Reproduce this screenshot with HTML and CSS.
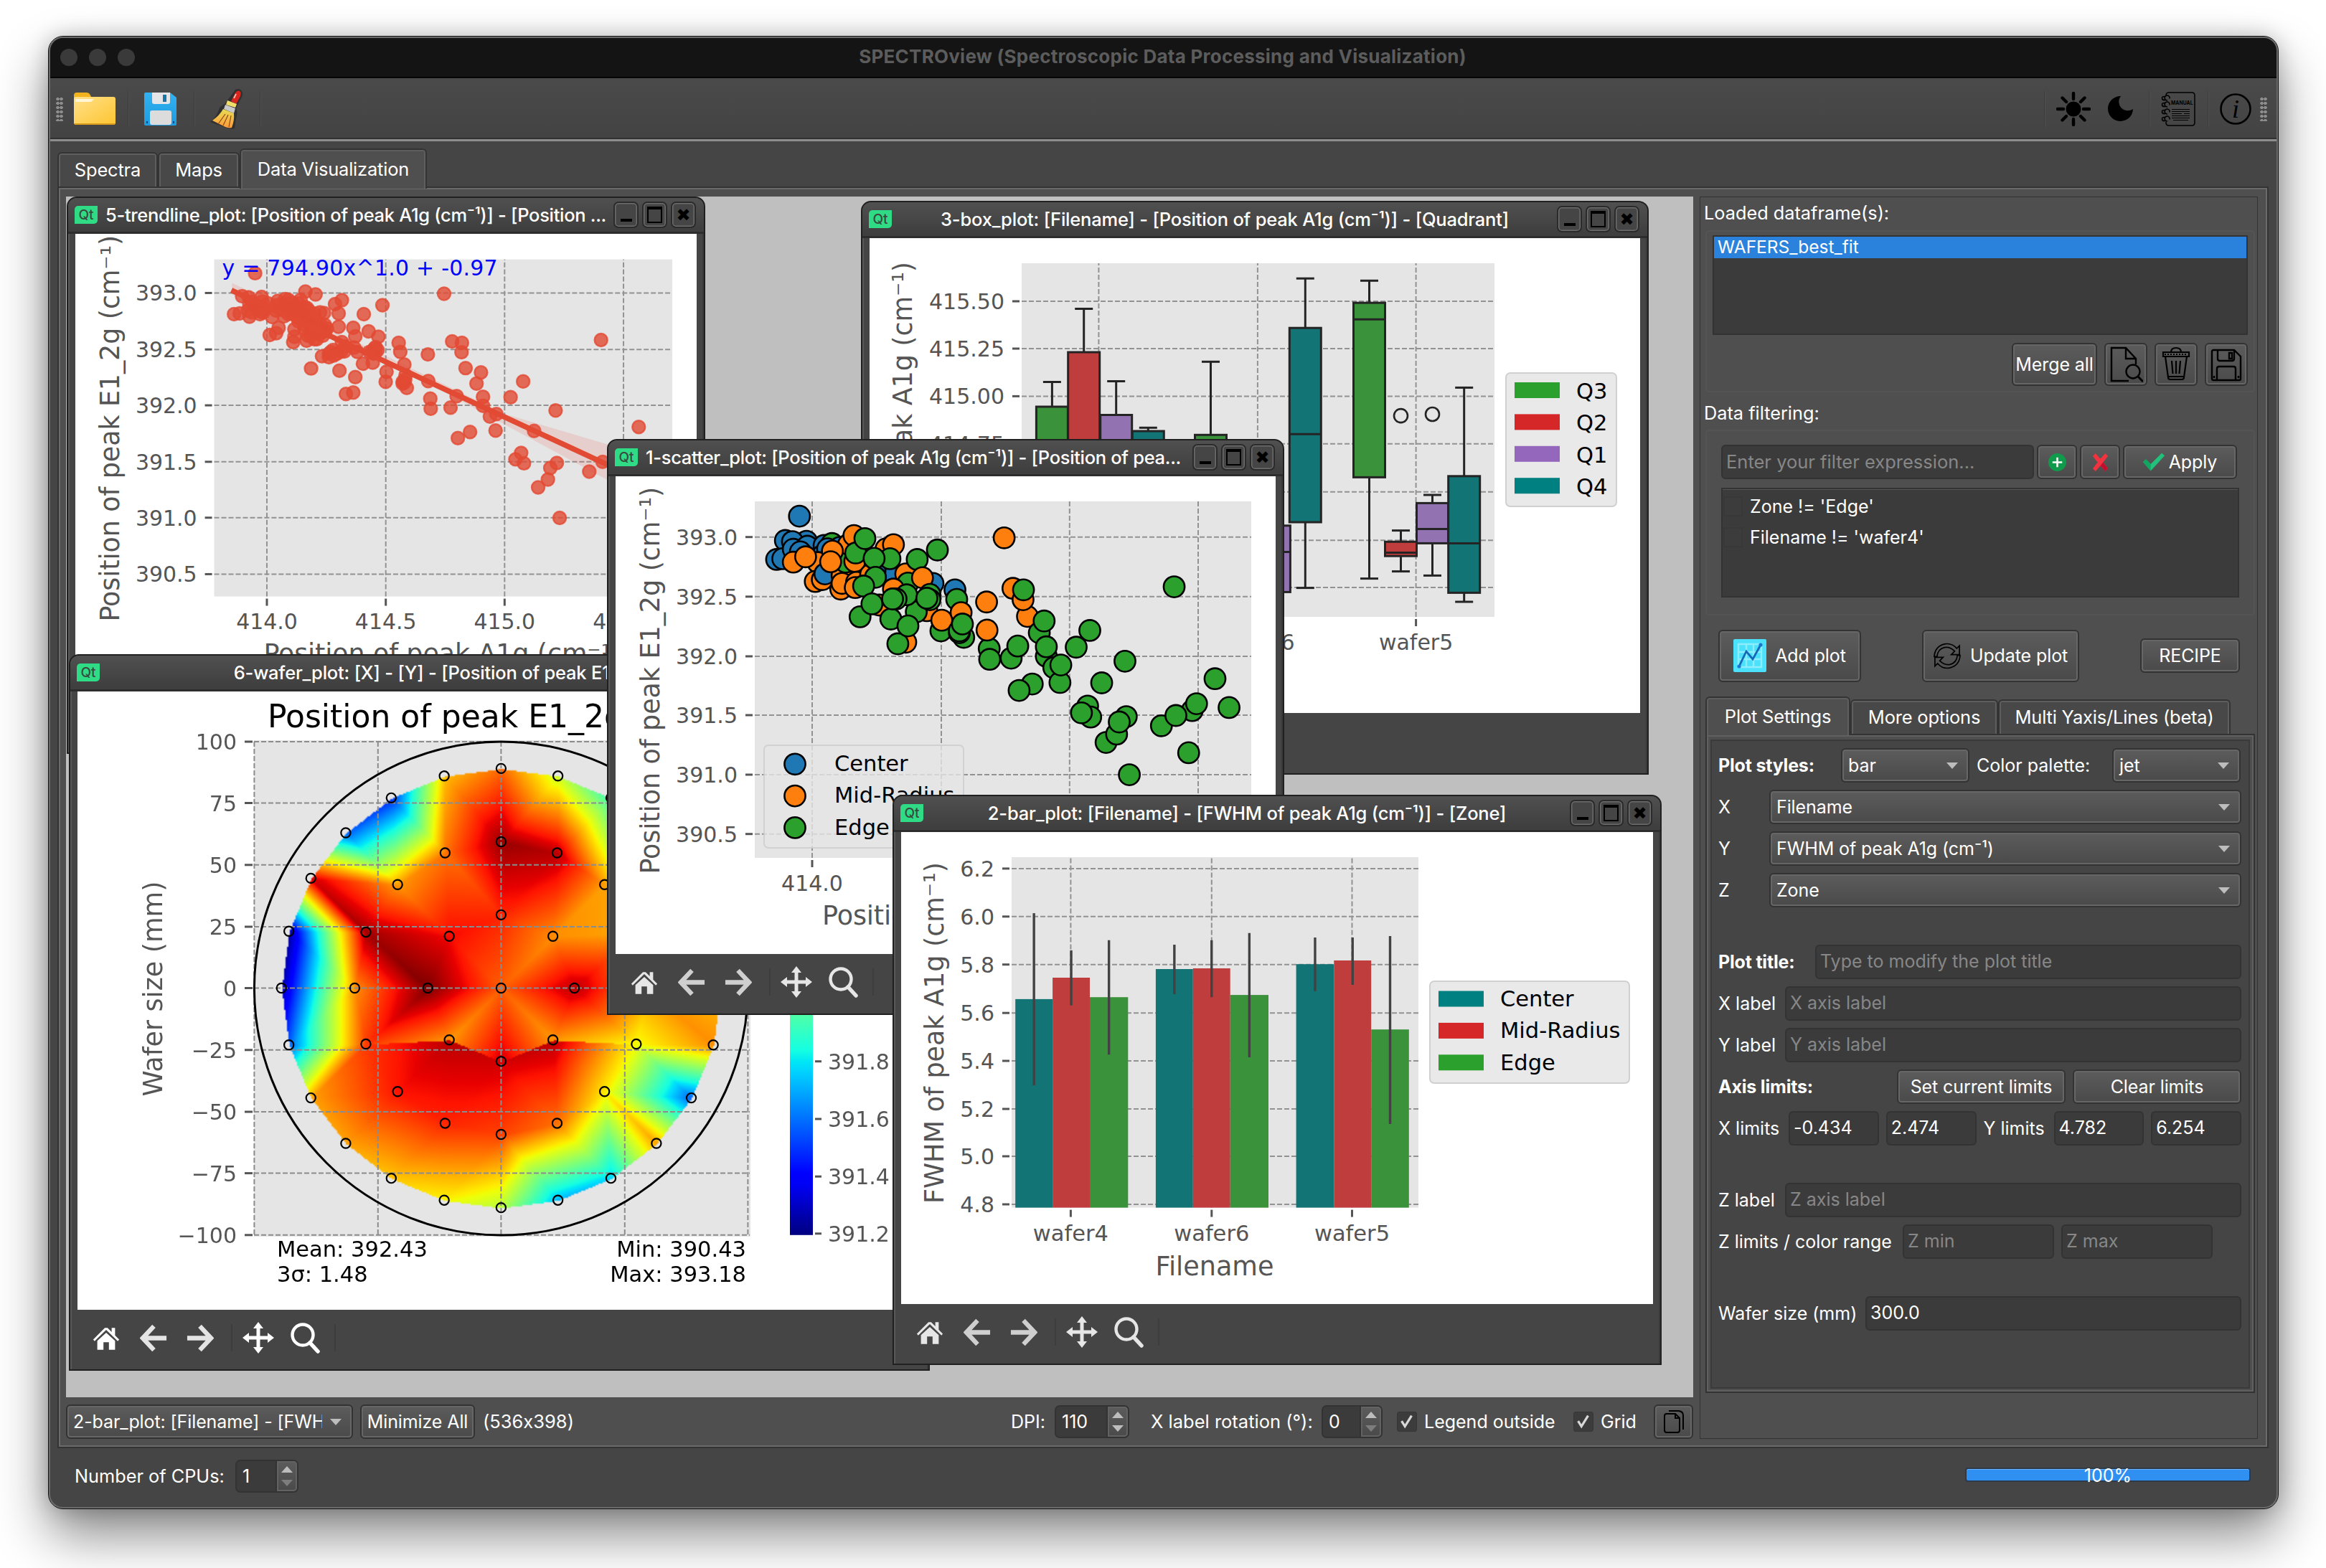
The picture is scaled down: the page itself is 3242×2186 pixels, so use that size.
FILE: index.html
```html
<!DOCTYPE html>
<html lang="en">
<head>
<meta charset="utf-8">
<title>SPECTROview (Spectroscopic Data Processing and Visualization)</title>
<link rel="stylesheet" href="styles.css">
</head>
<body>
<svg class="defs" width="0" height="0">
  <defs>
    <linearGradient id="gFolder" x1="0" y1="0" x2="1" y2="1"><stop offset="0" stop-color="#ffe08a"/><stop offset="1" stop-color="#fdc530"/></linearGradient>
    <linearGradient id="gFlop" x1="0" y1="0" x2="0" y2="1"><stop offset="0" stop-color="#32b2f0"/><stop offset="1" stop-color="#1d9ce0"/></linearGradient>
    <linearGradient id="gBroom" x1="0" y1="0" x2="0" y2="1"><stop offset="0" stop-color="#e8dc55"/><stop offset="1" stop-color="#ff9a3c"/></linearGradient>
  </defs>
  <symbol id="home" viewBox="0 0 42 36"><path d="M2 20 19 3l4 0 6 6V3h5v11l6 6-2 2.500L21 6 4 22.500z"/><path d="M21 10 34 22v13H25V24h-8v11H8V22z"/></symbol>
  <symbol id="back" viewBox="0 0 40 40"><path d="M20 3 4 20l16 17M5 20h33" fill="none" stroke="currentColor" stroke-width="6.500"/></symbol>
  <symbol id="fwd" viewBox="0 0 40 40"><path d="M20 3l16 17-16 17M35 20H2" fill="none" stroke="currentColor" stroke-width="6.500"/></symbol>
  <symbol id="move" viewBox="0 0 44 44"><path d="M22 0l7 9h-4.500v10.500H35V15l9 7-9 7v-4.500H24.500V35H29l-7 9-7-9h4.500V24.500H9V29l-9-7 9-7v4.500h10.500V9H15z"/></symbol>
  <symbol id="lens" viewBox="0 0 44 44"><circle cx="18" cy="18" r="14.500" fill="none" stroke="currentColor" stroke-width="4.400"/><path d="M28 29 39 41" stroke="currentColor" stroke-width="5.500" stroke-linecap="round"/></symbol>
</svg>

<main class="app">
  <header class="titlebar">
    <span class="dot"></span><span class="dot"></span><span class="dot"></span>
    <h1>SPECTROview (Spectroscopic Data Processing and Visualization)</h1>
  </header>

  <nav class="toolbar">
    <span class="grip"></span>
    <svg class="ic-folder" viewBox="0 0 58 45"><path d="M0 4q0-4 4-4h14q4 0 6 6l2 5H0z" fill="#f2b31c"/><rect y="6" width="58" height="39" rx="3" fill="url(#gFolder)"/><path d="M2 9h26l-4 4H2z" fill="#fff6d8"/><path d="M1 43h56v2H1z" fill="#d79a1c"/></svg>
    <span class="sep"></span>
    <svg class="ic-flop" viewBox="0 0 45 46"><path d="M2 0h34l9 7v37q0 2-2 2H2q-2 0-2-2V2q0-2 2-2z" fill="url(#gFlop)"/><path d="M11 0h25v13q0 3-3 3H14q-3 0-3-3z" fill="#e3e5e8"/><rect x="26" y="3" width="5" height="10" fill="#1976a8"/><rect x="8" y="25" width="30" height="20" rx="3" fill="#dcdcdc"/><path d="M3 40h2v3H3zM40 40h2v3h-2z" fill="#0b4a86"/></svg>
    <span class="sep"></span>
    <svg class="ic-broom" viewBox="0 0 48 58"><path d="M36 2q6-3 9 2t-2 12l-6 12q3 6 0 14l-2 14q-4 2-12-1L1 47q10-8 13-20l8-6z" fill="#303030"/><path d="M37 5q4-3 6 0t-2 10l-4 7-7-4z" fill="#d9261c"/><path d="M37 8l-3 6" stroke="#ffb0a8" stroke-width="2"/><path d="M25 17l13 5-2 5-13-4z" fill="#f0de6a"/><path d="M22 23l14 5-2 7-14-6z" fill="#c9c9c9"/><path d="M19 29l15 6q1 9-3 20-4 1-9-1L4 45q10-7 15-16z" fill="url(#gBroom)"/><path d="M22 36 12 50M26 37l-7 15M30 38l-3 16" stroke="#8a4a10" stroke-width="1.200"/></svg>
    <span class="sep"></span>
    <span class="grow"></span>
    <span class="sep"></span>
    <svg class="ic-sun" viewBox="0 0 48 48"><circle cx="24" cy="24" r="10.500"/><path d="M24 2v8M24 38v8M2 24h8M38 24h8M8.500 8.500l5.500 5.500M34 34l5.500 5.500M8.500 39.500 14 34M34 14l5.500-5.500" stroke="#000" stroke-width="4.400" stroke-linecap="round"/></svg>
    <svg class="ic-moon" viewBox="0 0 35 35"><path d="M18 0A17.500 17.500 0 1 0 35 18a12.500 12.500 0 0 1-17-18z"/></svg>
    <span class="sep"></span>
    <svg class="ic-man" viewBox="0 0 48 48" fill="none" stroke="#000" stroke-width="1.500"><path d="M7 6V5q0-4 4-4h32q4 0 4 4v38q0 4-4 4H11q-4 0-4-4v-1"/><path d="M15 24.500h25M15 27.500h25M15 30.500h14M32 30.500h8M15 33.500h25M15 36.500h25M17 39.500h21" stroke-width="1.100"/><g stroke-width="1.600"><path d="M12 9.500A3.500 3.500 0 1 0 9 12M6 6.500Q1 6 1.500 9t4 2.500"/><path d="M12 18.500A3.500 3.500 0 1 0 9 21M6 15.500Q1 15 1.500 18t4 2.500"/><path d="M12 28.500A3.500 3.500 0 1 0 9 31M6 25.500Q1 25 1.500 28t4 2.500"/><path d="M12 38.500A3.500 3.500 0 1 0 9 41M6 35.500Q1 35 1.500 38t4 2.500"/></g><text x="14" y="17.500" font-size="7.500" font-weight="700" font-family="Inter,sans-serif" textLength="30.500" lengthAdjust="spacingAndGlyphs" stroke="none" fill="#000">MANUAL</text></svg>
    <span class="sep"></span>
    <svg class="ic-info" viewBox="0 0 44 44"><circle cx="22" cy="22" r="20.500" fill="none" stroke="#000" stroke-width="2.600"/><text x="22" y="34" text-anchor="middle" font-family="Liberation Serif,serif" font-style="italic" font-size="36">i</text></svg>
    <span class="grip"></span>
  </nav>

  <div class="tabs">
    <span class="tab">Spectra</span><span class="tab t2">Maps</span><span class="tab t3 on">Data Visualization</span>
  </div>

  <section class="page">
    <div class="work">
      <div class="mdi">
        <article class="win w3">
          <header><i class="qt">Qt</i><b>3-box_plot: [Filename] - [Position of peak A1g (cm⁻¹)] - [Quadrant]</b><span class="wb min"></span><span class="wb max"></span><span class="wb cls"></span></header>
          <div class="plot"><svg id="p3" viewBox="1212 332 1074 662"></svg></div>
        </article>
        <article class="win w5">
          <header><i class="qt">Qt</i><b>5-trendline_plot: [Position of peak A1g (cm⁻¹)] - [Position ...</b><span class="wb min"></span><span class="wb max"></span><span class="wb cls"></span></header>
          <div class="plot"><svg id="p5" viewBox="104 326 868 640"></svg></div>
        </article>
        <article class="win w6">
          <header><i class="qt">Qt</i><b>6-wafer_plot: [X] - [Y] - [Position of peak E1_2g (cm⁻¹)]</b><span class="wb min"></span><span class="wb max"></span><span class="wb cls"></span></header>
          <div class="plot"><canvas id="wafer" width="346" height="346"></canvas><svg id="p6" viewBox="108 964 1176 862"></svg></div>
          <footer><svg class="h"><use href="#home"/></svg><svg class="a"><use href="#back"/></svg><svg class="a f"><use href="#fwd"/></svg><i></i><svg class="m"><use href="#move"/></svg><svg class="z"><use href="#lens"/></svg><i></i></footer>
        </article>
        <article class="win w1">
          <header><i class="qt">Qt</i><b>1-scatter_plot: [Position of peak A1g (cm⁻¹)] - [Position of pea...</b><span class="wb min"></span><span class="wb max"></span><span class="wb cls"></span></header>
          <div class="plot"><svg id="p1" viewBox="858 664 920 666"></svg></div>
          <footer><svg class="h"><use href="#home"/></svg><svg class="a"><use href="#back"/></svg><svg class="a f"><use href="#fwd"/></svg><i></i><svg class="m"><use href="#move"/></svg><svg class="z"><use href="#lens"/></svg><i></i></footer>
        </article>
        <article class="win w2">
          <header><i class="qt">Qt</i><b>2-bar_plot: [Filename] - [FWHM of peak A1g (cm⁻¹)] - [Zone]</b><span class="wb min"></span><span class="wb max"></span><span class="wb cls"></span></header>
          <div class="plot"><svg id="p2" viewBox="1256 1160 1048 658"></svg></div>
          <footer><svg class="h"><use href="#home"/></svg><svg class="a"><use href="#back"/></svg><svg class="a f"><use href="#fwd"/></svg><i></i><svg class="m"><use href="#move"/></svg><svg class="z"><use href="#lens"/></svg><i></i></footer>
        </article>
      </div>
      <div class="plotbar">
        <div class="combo cur"><span>2-bar_plot: [Filename] - [FWHM</span></div>
        <div class="btn mini">Minimize All</div>
        <span class="size">(536x398)</span>
        <span class="grow"></span>
        <span class="dpi">DPI:</span>
        <div class="spin s1"><span>110</span><em><u></u><s></s></em></div>
        <span class="rot">X label rotation (°):</span>
        <div class="spin s2"><span>0</span><em><u></u><s class="dim"></s></em></div>
        <span class="chk c1"><svg viewBox="0 0 28 28"><path d="M6 13l5 8L21 5"/></svg></span><span class="lo">Legend outside</span>
        <span class="chk c2"><svg viewBox="0 0 28 28"><path d="M6 13l5 8L21 5"/></svg></span><span>Grid</span>
        <div class="btn copy"><svg viewBox="0 0 28 34" fill="none" stroke="#000" stroke-width="2"><path d="M3 6h13l6 6v17q0 3-3 3H4q-3 0-3-3V9q0-3 3-3M16 6v6h6M7 2h14q6 1 6 6v20"/></svg></div>
      </div>
    </div>

    <aside class="side">
      <p class="cap">Loaded dataframe(s):</p>
      <div class="group g1">
        <div class="list"><div class="sel">WAFERS_best_fit</div></div>
        <div class="row end">
          <div class="btn merge">Merge all</div>
          <div class="btn sq"><svg viewBox="0 0 48 50" fill="none" stroke="#000" stroke-width="2.400"><path d="M38 25V17L24 2H4v46h24M24 2v15h14"/><circle cx="34" cy="35" r="9.500"/><path d="M41 42l7 7" stroke-width="3"/></svg></div>
          <div class="btn sq"><svg viewBox="0 0 48 50" fill="none" stroke="#000" stroke-width="2.200"><path d="M6 8h36v6H6zM17 8q0-6 7-6t7 6M9 14l4 29q0 3 3 3h16q3 0 3-3l4-29M18 20l1.500 18M24 20v18M30 20l-1.500 18M14 42h20"/><path d="M8 11h32" stroke-dasharray="2 2"/></svg></div>
          <div class="btn sq"><svg viewBox="0 0 48 50" fill="none" stroke="#000" stroke-width="2.400"><path d="M4 7q0-2 2-2h29l9 9v31q0 2-2 2H6q-2 0-2-2zM12 5v12q0 3 3 3h17q3 0 3-3V5M28 9h4v8h-4zM11 46V31q0-3 3-3h20q3 0 3 3v15M7 41v3M41 41v3"/></svg></div>
        </div>
      </div>
      <p class="cap c2nd">Data filtering:</p>
      <div class="group g2">
        <div class="row">
          <div class="inp expr ph">Enter your filter expression...</div>
          <div class="btn ico"><svg viewBox="0 0 28 28"><circle cx="14" cy="14" r="13" fill="#109a4c"/><path d="M14 7v14M7 14h14" stroke="#fff" stroke-width="2.600"/></svg></div>
          <div class="btn ico"><svg viewBox="0 0 28 28"><path d="M3 5l4-4 7 8 7-8 4 4-7 9 7 9-4 4-7-8-7 8-4-4 7-9z" fill="#f3323f"/><path d="M14 19l4-5 7 9-4 4z" fill="#c0102e"/></svg></div>
          <div class="btn apply"><svg viewBox="0 0 32 26"><path d="M0 13l4-4 7 7L27 0l4 4-20 22z" fill="#22c07a"/><path d="M0 13l4-4 7 7v10z" fill="#12a562"/></svg>Apply</div>
        </div>
        <div class="list filters">
          <div><i></i>Zone != 'Edge'</div>
          <div><i></i>Filename != 'wafer4'</div>
        </div>
      </div>
      <div class="row actions">
        <div class="btn add"><svg viewBox="0 0 46 46"><rect width="46" height="46" rx="2" fill="#4be1fb"/><path d="M7 7h32v32H7zM7 18h32M7 28h32M18 7v32M28 7v32" fill="none" stroke="#8ceefd" stroke-width="2.400"/><path d="M8 38 18 17l9 11L38 8" fill="none" stroke="#1669b8" stroke-width="2.800"/><circle cx="8" cy="38" r="2.600" fill="#1b78d0"/><circle cx="38" cy="8" r="2.600" fill="#1b78d0"/></svg>Add plot</div>
        <div class="btn upd"><svg viewBox="0 0 40 38" fill="none" stroke="#000" stroke-width="1.800"><path d="M1 20Q2 5 16 1.500 27-.5 34 8l4-4v13H26l5-5Q24 5 16 6.500 6 9 5 20zM39 18q-1 15-15 18.500Q13 38.500 6 30l-4 4V21h12l-5 5q7 7 15 5.500Q34 29 35 18z"/></svg>Update plot</div>
        <div class="btn rec">RECIPE</div>
      </div>
      <div class="tabs in">
        <span class="tab on a1">Plot Settings</span><span class="tab a2">More options</span><span class="tab a3">Multi Yaxis/Lines (beta)</span>
      </div>
      <div class="pane"><div class="form">
        <div class="row"><b class="l1">Plot styles:</b><div class="combo k1">bar</div><span class="l2">Color palette:</span><div class="combo k1">jet</div></div>
        <div class="row"><span class="l3">X</span><div class="combo fill">Filename</div></div>
        <div class="row"><span class="l3">Y</span><div class="combo fill">FWHM of peak A1g (cm⁻¹)</div></div>
        <div class="row gap"><span class="l3">Z</span><div class="combo fill">Zone</div></div>
        <div class="row"><b class="l4">Plot title:</b><div class="inp ph fill">Type to modify the plot title</div></div>
        <div class="row"><span class="l5">X label</span><div class="inp ph fill">X axis label</div></div>
        <div class="row"><span class="l5">Y label</span><div class="inp ph fill">Y axis label</div></div>
        <div class="row"><b class="grow">Axis limits:</b><div class="btn lim">Set current limits</div><div class="btn lim">Clear limits</div></div>
        <div class="row gap"><span class="l6">X limits</span><div class="inp n">-0.434</div><div class="inp n">2.474</div><span class="l7">Y limits</span><div class="inp n">4.782</div><div class="inp n">6.254</div></div>
        <div class="row"><span class="l5">Z label</span><div class="inp ph fill">Z axis label</div></div>
        <div class="row gap"><span class="l8">Z limits / color range</span><div class="inp ph zz">Z min</div><div class="inp ph zz">Z max</div></div>
        <div class="row"><span class="l9">Wafer size (mm)</span><div class="inp fill">300.0</div></div>
      </div></div>
    </aside>
  </section>

  <footer class="status">
    <span class="cpu">Number of CPUs:</span>
    <div class="spin s3"><span>1</span><em><u></u><s class="dim"></s></em></div>
    <span class="grow"></span>
    <div class="prog">100%</div>
  </footer>
</main>
<script src="plots.js"></script>
</body>
</html>
```
FILE: styles.css
```css
*{box-sizing:border-box}
body{margin:0;width:3242px;height:2186px;padding:51px 67px 0 68px;background:#fff;overflow:hidden;
  font:25px/30px Inter,"Noto Sans",sans-serif;font-feature-settings:"calt" 0;color:#fff;-webkit-font-smoothing:antialiased}
p,h1{margin:0}
.defs{position:absolute}
.grow{flex:1}
.app{height:2052px;border-radius:20px;background:#454545;display:flex;flex-direction:column;overflow:hidden;
  border:2px solid #6a6a6a;outline:1px solid #111;
  box-shadow:0 36px 72px rgba(0,0,0,.48),0 0 30px rgba(0,0,0,.22)}
.titlebar{height:56px;background:#141414;border-bottom:2px solid #060606;display:flex;align-items:center;gap:16px;padding-left:14px;position:relative;flex:none}
.dot{width:24px;height:24px;border-radius:50%;background:#3a3a3a}
.titlebar h1{position:absolute;left:0;right:2px;top:11px;text-align:center;font-size:26px;letter-spacing:.25px;font-weight:700;color:#5c5c5c}
.toolbar{height:88px;flex:none;background:linear-gradient(#4a4a4a,#434343);border-bottom:3px solid #8c8c8c;box-shadow:inset 0 -2px #303030;display:flex;align-items:center;padding:0 13px 0 8px}
.toolbar svg{display:block;flex:none}
.grip{width:10px;height:34px;background:radial-gradient(circle,#8d8d8d 2px,transparent 2.500px) 0 0/5px 6px}
.sep{width:2px;height:50px;background:#3b3b3b;border-right:1px solid #505050}
.ic-folder{width:58px;height:45px;margin:0 17px 0 15px}
.ic-flop{width:45px;height:46px;margin:0 24px 0 21px}
.ic-broom{width:48px;height:58px;margin:0 22px 0 20px}
.ic-sun{width:48px;height:48px;margin:0 24px 0 15px}
.ic-moon{width:35px;height:35px;margin-right:22px}
.ic-man{width:48px;height:48px;margin:0 17px 0 15px}
.ic-info{width:44px;height:44px;margin:0 12px 0 15px}

.tabs{display:flex;align-items:flex-end;height:66px;padding-left:10px;position:relative;z-index:1;margin-bottom:-3px;flex:none}
.tab{height:48px;border:2px solid #343434;border-bottom:0;border-radius:6px 6px 0 0;background:#484848;box-shadow:inset 0 2px #5e5e5e,inset 2px 0 #5e5e5e,inset -2px 0 #5e5e5e;
  width:140px;margin-bottom:3px;display:flex;align-items:center;justify-content:center;font-size:25.500px;letter-spacing:-.2px}
.t2{width:114px}
.t3{width:261px}
.tab.on{height:56px;margin-bottom:0;background:#4f4f4f;padding-bottom:0}
.page{height:1759px;flex:none;margin:0 11px 0 10px;border:2px solid #333;box-shadow:inset 0 0 0 2px #6a6a6a;background:#4f4f4f;padding:12px 12px 0 10px;display:flex;gap:9px}
.work{width:2268px;flex:none}
.mdi{height:1674px;background:#bfbfbf;position:relative;overflow:hidden}
.win{position:absolute;background:#454545;border:2px solid #202020;border-radius:14px 14px 0 0;padding:0 10px;box-shadow:inset 2px 0 #585858,inset -2px 0 #3a3a3a}
.win header{height:50px;margin:0 -10px;padding:0 11px 0 9px;display:flex;align-items:center;gap:5px;border-radius:12px 12px 0 0;background:linear-gradient(#505050,#3f3f3f 90%);border-bottom:3px solid #2d2d2d}
.win header b{flex:1;font-size:25.500px;font-weight:500;text-align:center;white-space:nowrap;letter-spacing:-.2px}
.w5 header b,.w1 header b{letter-spacing:-.32px;text-align:left;padding-left:5px}
.qt{width:32px;height:25px;margin-right:1px;background:#2fdc85;border-radius:5px 0 5px 0;color:#3a4a40;font-style:normal;font-size:19px;line-height:25px;text-align:center;font-weight:500;flex:none}
.wb{width:35px;height:37px;border:2px solid #2b2b2b;border-radius:7px;box-shadow:inset 0 0 0 1.500px #6d6d6d;background:#454545;display:flex;align-items:center;justify-content:center;flex:none}
.min::before{content:"";width:16px;height:4px;margin-top:14px;background:#000}
.max::before{content:"";width:17px;height:17px;border:2px solid #000;border-top-width:4px}
.cls::before{content:"✖";color:#000;font:bold 24px/24px "DejaVu Sans",sans-serif}
.plot{background:#fff;position:relative;overflow:hidden}
.plot svg{position:relative;display:block;width:100%;height:100%}
.plot canvas{position:absolute;left:246px;top:68px;width:692px;height:692px}
.w5{left:1px;top:0;width:890px;height:777px}.w5 .plot{height:640px}
.w3{left:1108px;top:6px;width:1098px;height:800px}.w3 .plot{height:662px}
.w6{left:4px;top:638px;width:1200px;height:999px}.w6 .plot{height:862px}
.w1{left:754px;top:338px;width:944px;height:803px}.w1 .plot{height:666px}
.w2{left:1152px;top:834px;width:1072px;height:795px}.w2 .plot{height:658px}
.win footer{height:78px;display:flex;align-items:center;padding-left:21px;color:#cfcfcf;fill:currentColor}
.win footer svg{display:block;flex:none}
.win footer i{width:2px;height:38px;background:#3d3d3d}
.win footer .h{width:40px;height:35px;color:#e6e6e6;fill:#e6e6e6;margin:0 27px 0 -1px}
.a{width:39px;height:39px;margin-right:25px}
.a.f{margin-right:24px}
.m{width:44px;height:44px;color:#e6e6e6;fill:#e6e6e6;margin:0 22px 0 14px}
.z{width:44px;height:44px;color:#e6e6e6;margin-right:18px}
.win.w6 .h,.w6 .m,.w6 .z{color:#fff;fill:#fff}
.w6 .a{color:#e4e4e4}

.plotbar{height:48px;margin-top:10px;display:flex;align-items:center}
.btn,.combo{height:48px;border:2px solid #333;border-radius:6px;background:linear-gradient(#5c5c5c,#4a4a4a);box-shadow:inset 0 0 0 2px #666;display:flex;align-items:center;justify-content:center;white-space:nowrap;letter-spacing:-.1px;flex:none}
.combo{justify-content:flex-start;padding:0 14px 0 8px}
.combo::after{content:"";margin-left:auto;border:8px solid transparent;border-top:9px solid #bdbdbd;border-bottom:0}
.cur{width:400px}
.cur span{width:347px;overflow:hidden}
.mini{width:160px;margin-left:10px}
.size{margin-left:11px;font-size:25.500px}
.dpi{width:53px;margin-right:8px}
.spin{height:46px;border:2px solid #333;border-radius:7px;background:#3b3b3b;display:flex;align-items:center;justify-content:space-between;padding-left:8px;flex:none}
.spin em{width:30px;height:100%;background:linear-gradient(#5c5c5c,#4a4a4a);box-shadow:inset 0 0 0 2px #626262;border-left:2px solid #333;display:flex;flex-direction:column;align-items:center;justify-content:center;gap:10px;border-radius:0 5px 5px 0}
.spin u,.spin s{border:8px solid transparent}
.spin u{border-bottom:9px solid #bdbdbd;border-top:0}
.spin s{border-top:9px solid #bdbdbd;border-bottom:0}
.spin s.dim{border-top-color:#7d7d7d}
.s1{width:104px;margin-right:30px}
.rot{width:227px;margin-right:11px;white-space:nowrap;font-size:25.500px}
.s2{width:85px;margin-right:20px}
.s3{width:88px}
.chk{width:28px;height:28px;background:#3c3c3c;border:1px solid #363636;border-radius:3px;margin-right:10px;flex:none}
.chk svg{display:block;fill:none;stroke:#d8d8d8;stroke-width:3.500}
.lo{width:188px;margin-right:20px;white-space:nowrap}
.copy{width:55px;margin-left:26px}
.copy svg{width:28px;height:34px}
.chk.c2 ~ span{width:48px}

.side{width:778px;height:1732px;border:1.500px solid #333;padding:0 3px 0 7px;flex:none}
.cap{margin-left:-2px;padding-top:7px;height:46px;line-height:30px;font-size:25.300px}
.group{border:2px solid #545454;border-radius:5px}
.g1{height:226px;padding:5px 8px}
.list{height:139px;background:#3b3b3b;border:2px solid #333}
.sel{height:30px;background:#2b82dc;padding-left:5px;line-height:29px;font-size:24.500px}
.row{display:flex;align-items:center}
.end{justify-content:flex-end;gap:10px;margin-top:11px}
.merge{width:119px;height:60px}
.sq{width:60px;height:60px}
.sq svg{width:48px;height:50px}
.c2nd{height:52px;padding-top:14px}
.g2{height:259px;padding:19px 20px}
.g2 .row{gap:4px}
.inp{height:48px;background:#3b3b3b;border:2px solid #333;border-radius:6px;padding-left:5px;line-height:43px;white-space:nowrap}
.ph{color:#878787}
.expr{width:436px;font-size:25.500px}
.ico{width:56px}
.ico svg{width:27px;height:27px}
.apply{width:159px}
.apply svg{width:31px;height:26px;margin-right:5px}
.filters{height:153px;margin-top:12px;padding-top:2px;box-shadow:inset 0 1px #555}
.filters div{height:43px;display:flex;align-items:center}
.filters i{width:27px;height:28px;margin:0 10px 0 1px;border:2px solid #383838;background:#3c3c3c}
.actions{margin:19px 0 0 18px;height:74px}
.add{width:199px;height:73px;gap:12px}
.add svg{width:46px;height:46px}
.upd{width:219px;height:73px;margin-left:85px;gap:13px}
.upd svg{width:38px;height:37px}
.rec{width:139px;margin-left:85px}
.in{height:74px;padding:0;margin-bottom:-2px}
.in .tab{height:48px;margin-bottom:2px}
.in .tab.on{height:54px;margin-bottom:0}
.a1{width:202px}.a2{width:206px}.tabs .a3{width:324px}
.pane{height:919px;border:2px solid #333;box-shadow:inset 0 0 0 2px #606060;padding:6px 5px}
.form{height:905px;border:2px solid #3a3a3a;background:#454545;padding:10px 10px 10px 9px;display:flex;flex-direction:column;gap:10px}
.form .row{height:48px;gap:10px;flex:none}
.form .gap{margin-bottom:42px}
.fill{flex:1}
.form b{font-weight:700;letter-spacing:-.2px}
.l1{width:161px}.k1{width:179px}.l2{width:179px}.l3{width:61px}.l4{width:125px}.l5{width:83px;white-space:nowrap}
.lim{width:235px}.l6,.l7{width:88px;white-space:nowrap}.n{flex:1}.l8{width:247px;white-space:nowrap}.zz{width:211px}.l9{width:195px;white-space:nowrap}

.status{flex:1;display:flex;align-items:center;padding:0 36px 5px 34px}
.cpu{width:224px;font-size:25.300px}
.prog{width:398px;height:20px;margin-top:-3px;border:2px solid #2c3a4a;border-radius:4px;background:#3090f2;box-shadow:inset 0 1px #6db3ff;text-align:center;line-height:18px;font-size:25px}
```
FILE: plots.js
```js
const NS = 'http://www.w3.org/2000/svg';
const GREEN = '#2ca02c', ORANGE = '#ff7f0e', BLUE = '#1f77b4';

function pen(id) {
  const root = document.getElementById(id);
  const add = (tag, attrs, text) => {
    const node = document.createElementNS(NS, tag);
    for (const k in attrs) node.setAttribute(k, attrs[k]);
    if (text !== undefined) node.textContent = text;
    root.appendChild(node);
    return node;
  };
  return {
    add,
    rect: (x0, y0, x1, y1, fill, more = {}) => add('rect', { x: x0, y: y0, width: x1 - x0, height: y1 - y0, fill, ...more }),
    line: (x1, y1, x2, y2, stroke, w, more = {}) => add('line', { x1, y1, x2, y2, stroke, 'stroke-width': w, ...more }),
    text: (x, y, s, more = {}) => add('text', { x, y, 'font-family': 'DejaVu Sans, sans-serif', 'font-size': 30, fill: '#555', ...more }, s),
    vtext(x, yc, s, len, size = 36.6) {
      this.text(0, 0, s, { transform: `translate(${x} ${yc}) rotate(-90)`, 'text-anchor': 'middle', 'font-size': size, textLength: len });
    },
    axes(x0, y0, x1, y1, xs, ys, bg = '#e5e5e5') {
      if (bg) this.rect(x0, y0, x1, y1, bg);
      const dash = { 'stroke-dasharray': '7 3' };
      xs.forEach(x => { this.line(x, y1, x, y0, '#929292', 2, dash); this.line(x, y1 + 3, x, y1 + 13, '#555', 3); });
      ys.forEach(([y, s]) => {
        this.line(x0, y, x1, y, '#929292', 2, dash);
        this.line(x0 - 13, y, x0 - 3, y, '#555', 3);
        if (s) this.text(x0 - 24, y + 11, s, { 'text-anchor': 'end' });
      });
    },
    legend(x0, y0, x1, y1) { this.rect(x0, y0, x1, y1, '#e9e9e9', { rx: 6, stroke: '#d0d0d0', 'stroke-width': 2 }); }
  };
}

/* Shared point cloud: colour key, then plot-grid x and y. */
const cloud = `b448,226 b416,290 b396,340 b410,338 b464,292 b432,293 b434,313 b466,305 b504,303 b450,320 b500,330 b585,345 b560,335
b525,310 g522,298 b540,308 b512,312 o490,348 o484,398 o500,393 o434,347 o462,333 b506,378 o545,382 o542,418 o545,403 g553,347 o560,300 o572,277 o523,318 o519,346
o574,345 g576,323 g597,285 b654,375 b620,370 o578,400 o610,380 o575,414 o645,312 o662,301 g654,338 g618,337 o690,378 o630,460 g621,387 g594,410
g586,491 g613,457 b752,403 b802,420 g716,340 g762,315 g695,402 o662,418 o728,388 o738,475 g714,478 g656,497 g692,433 g668,444 g660,444 o690,558 g672,562 g695,515
g745,432 g745,446 g738,442 g770,528 o772,500 g806,445 g822,545 g812,533 o816,480 g812,528 g819,510 o914,283 o934,416 o967,490 o957,446 g958,420 o874,452
g880,575 o875,526 g881,603 g930,600 g945,568 g994,533 g1005,502 g1010,595 g1010,570 g1027,625 g1041,664 g1043,618 g978,668 g948,685 g1078,571 g1109,527
g1136,665 g1189,608 g1104,726 g1111,755 g1090,744 g1146,822 g1170,800 g1192,754 g1176,768 g1199,907 g1272,778 g1342,738 g1305,751 g1352,720 g1394,654 g1426,730 g1334,849 g1301,412`
  .trim().split(/\s+/).map(t => { const [x, y] = t.slice(1).split(',').map(Number); return { c: { b: BLUE, o: ORANGE, g: GREEN }[t[0]], x, y }; });

/* 5: trend line */
{
  const p = pen('p5');
  p.axes(298, 361, 938, 832, [371.6, 537.7, 703.7, 869.8],
    [[407.9, '393.0'], [486.8, '392.5'], [564.9, '392.0'], [643.8, '391.5'], [721.9, '391.0'], [800.8, '390.5']]);
  const extra = [[430, 330], [440, 335], [470, 325], [480, 310], [520, 330], [530, 340], [545, 330], [555, 310], [570, 320], [590, 370], [600, 390], [610, 370], [600, 410], [615, 400], [570, 380], [565, 345], [515, 325], [580, 330], [460, 340], [630, 450], [640, 440], [650, 450], [670, 430], [740, 450], [750, 440], [730, 445], [590, 345], [608, 335], [625, 380], [700, 445], [585, 400], [555, 360], [500, 315], [530, 300], [545, 318],
    [440, 305], [455, 318], [468, 335], [535, 325], [560, 325], [548, 342], [575, 360], [598, 360], [590, 385], [608, 395], [618, 388], [585, 375], [605, 380], [568, 368], [594, 338], [635, 445], [642, 455], [742, 436], [816, 530], [818, 522]];
  [...cloud, ...extra.map(([x, y]) => ({ x, y }))].forEach(q => p.add('circle', {
    cx: 371.6 + (q.x - 477) * .5665, cy: 407.9 + (q.y - 281) * .5021, r: 9, fill: '#e24a33', 'fill-opacity': .8, stroke: '#e24a33', 'stroke-opacity': .8, 'stroke-width': 2.5 }));
  p.add('polygon', { points: '323,394 540,497 704,577 849,620 940,655 940,730 849,670 704,592 540,503 323,410', fill: '#e24a33', 'fill-opacity': .15 });
  p.line(322, 404, 938, 690, '#e24a33', 7.5);
  p.text(309, 383, 'y = 794.90x^1.0 + -0.97', { fill: '#0000ff', textLength: 385 });
  [[371.6, '414.0'], [537.7, '414.5'], [703.7, '415.0'], [869.8, '415.5']].forEach(([x, s]) => p.text(x, 878, s, { 'text-anchor': 'middle' }));
  p.vtext(165, 597, 'Position of peak E1_2g (cm⁻¹)', 540);
  p.text(367, 925, 'Position of peak A1g (cm⁻¹)', { 'font-size': 36.6, textLength: 500 });
}

/* 3: box plot */
{
  const p = pen('p3');
  p.axes(1424, 367, 2083, 860, [1531.4, 1752.9, 1973.6],
    [[420, '415.50'], [486, '415.25'], [552.4, '415.00'], [618.8, '414.75'], [685.8], [753.2], [819.1]]);
  const C = { q3: '#3a923a', q2: '#c03d3e', q1: '#9372b2', q4: '#127475' }, K = '#242424';
  /* x, fill, whisker top, box top, median, box bottom, whisker bottom, outlier */
  [[1466.4, C.q3, 532.5, 567, 650, 760, 790], [1510.7, C.q2, 430.5, 491, 650, 760, 790], [1555.7, C.q1, 531.5, 578.5, 650, 760, 790], [1600.3, C.q4, 596.3, 601, 650, 760, 790],
   [1687.5, C.q3, 504.3, 606.3, 650, 760, 790], [1776.4, C.q1, 700, 732.8, 769.4, 825.4, 840], [1819.3, C.q4, 388.2, 457.2, 605.2, 728, 819.6],
   [1908.5, C.q3, 391.3, 422.2, 445.2, 665.4, 806.6], [1952.5, C.q2, 739.6, 755.3, 770.5, 775.2, 796.6, 579.6], [1996.5, C.q1, 690, 701.4, 737.5, 757.4, 802.4, 577.5], [2040.7, C.q4, 540.4, 663.8, 757.4, 826.4, 839]
  ].forEach(([x, f, wt, bt, m, bb, wb, o]) => {
    p.line(x, wt, x, bt, K, 3); p.line(x, bb, x, wb, K, 3);
    p.line(x - 12.5, wt, x + 12.5, wt, K, 3); p.line(x - 12.5, wb, x + 12.5, wb, K, 3);
    p.rect(x - 22, bt, x + 22, bb, f, { stroke: K, 'stroke-width': 3 });
    p.line(x - 22, m, x + 22, m, K, 3);
    if (o) p.add('circle', { cx: x, cy: o, r: 9.5, fill: 'none', stroke: K, 'stroke-width': 2.6 });
  });
  [[1531.4, 'wafer4'], [1752.9, 'wafer6'], [1973.6, 'wafer5']].forEach(([x, s]) => p.text(x, 906, s, { 'text-anchor': 'middle' }));
  p.vtext(1271, 615, 'Position of peak A1g (cm⁻¹)', 500);
  p.legend(2099, 520, 2253, 706);
  [['#2ca02c', 'Q3'], ['#d62728', 'Q2'], ['#9467bd', 'Q1'], ['#008080', 'Q4']].forEach(([f, s], i) => {
    p.rect(2111, 533 + i * 44.4, 2174, 555 + i * 44.4, f);
    p.text(2197, 556 + i * 44.3, s, { fill: '#000', 'font-size': 30.5 });
  });
}

/* 1: scatter */
{
  const p = pen('p1');
  p.axes(1052, 699, 1744, 1196, [1132, 1312, 1490.8, 1670],
    [[748.7, '393.0'], [831.8, '392.5'], [915, '392.0'], [997, '391.5'], [1080, '391.0'], [1162.7, '390.5']]);
  const dot = (cx, cy, fill) => p.add('circle', { cx, cy, r: 14.6, fill, stroke: '#000', 'stroke-width': 2.6 });
  cloud.forEach(q => dot(840 + q.x / 1.6333, 600 + q.y / 1.8892, q.c));
  p.rect(1065, 1039, 1343, 1182, '#e5e5e5', { rx: 6, 'fill-opacity': .8, stroke: '#ccc', 'stroke-width': 2, 'stroke-opacity': .8 });
  [[BLUE, 'Center'], [ORANGE, 'Mid-Radius'], [GREEN, 'Edge']].forEach(([f, s], i) => {
    dot(1108, 1065.3 + i * 44.3, f);
    p.text(1163, 1075 + i * 44.3, s, { fill: '#000', 'font-size': 30.5 });
  });
  p.text(1132, 1242, '414.0', { 'text-anchor': 'middle' });
  p.text(1146, 1289, 'Position of peak A1g (cm⁻¹)', { 'font-size': 36.6, textLength: 500 });
  p.vtext(919, 948.6, 'Position of peak E1_2g (cm⁻¹)', 540);
}

/* 2: bars */
{
  const p = pen('p2');
  p.axes(1410, 1195, 1977, 1683.6, [1492.4, 1688.8, 1884.5],
    [[1210.9, '6.2'], [1277.8, '6.0'], [1344.7, '5.8'], [1412.2, '5.6'], [1479, '5.4'], [1546, '5.2'], [1612, '5.0'], [1679, '4.8']]);
  const fills = ['#127475', '#c03d3e', '#3a923a'];
  /* x0, x1, top, error top, error bottom */
  [[1415.2, 1467.1, 1392.9, 1273.1, 1513.1], [1467.1, 1519, 1363, 1324.9, 1401.7], [1519, 1572.3, 1390.2, 1310.8, 1470.3],
   [1610.9, 1662.8, 1351, 1317, 1386], [1662.8, 1714.7, 1350, 1310.8, 1390.2], [1714.7, 1768, 1387.1, 1300.8, 1473.9],
   [1806.6, 1859.3, 1344.2, 1307, 1381.9], [1859.3, 1911.2, 1339, 1307, 1373], [1911.2, 1963.8, 1435.2, 1305, 1567]
  ].forEach(([a, b, t, e0, e1], i) => {
    p.rect(a, t, b, 1683.6, fills[i % 3]);
    p.line((a + b) / 2, e0, (a + b) / 2, e1, '#424242', 3.4);
  });
  [[1492.4, 'wafer4'], [1688.8, 'wafer6'], [1884.5, 'wafer5']].forEach(([x, s]) => p.text(x, 1730, s, { 'text-anchor': 'middle', 'font-size': 30.5 }));
  p.text(1693, 1778, 'Filename', { 'text-anchor': 'middle', 'font-size': 36.6 });
  p.vtext(1315, 1440, 'FWHM of peak A1g (cm⁻¹)', 476);
  p.legend(1993, 1368, 2271, 1510);
  [['#008080', 'Center'], ['#d62728', 'Mid-Radius'], ['#2ca02c', 'Edge']].forEach(([f, s], i) => {
    p.rect(2005, 1381.5 + i * 44.4, 2068, 1403.5 + i * 44.4, f);
    p.text(2091, 1402.5 + i * 44.8, s, { fill: '#000', 'font-size': 30.5 });
  });
}

/* 6: wafer map, linear interpolation over three rings of sites */
{
  const outer = [.70, .70, .68, .50, .42, .60, .80, .71, .17, .22, .93, .03, .04, .22, .74, .74, .70, .65, .57, .30, .33, .74, .22, .76];
  const mid = [.75, .73, .74, .95, .98, .79, .75, .97, .76, .85, .89, .87, .84, .79, .66, .64];
  const inner = [.95, .76, .87, .90, 1, .75, .93, .75];
  const ring = (vals, r) => vals.map((v, i) => {
    const a = i / vals.length * 2 * Math.PI;
    return { x: r * Math.cos(a), y: r * Math.sin(a), v };
  });
  const O = ring(outer, 89), M = ring(mid, 59.3), I = ring(inner, 29.7), C = { x: 0, y: 0, v: .81 };
  const tris = [];
  const hot = q => ({ ...q, v: .95 });
  for (let k = 0; k < 8; k++) {
    const i0 = I[k], i1 = I[(k + 1) % 8], m0 = M[2 * k], m1 = M[2 * k + 1], m2 = M[(2 * k + 2) % 16];
    const o = [0, 1, 2, 3].map(j => O[(3 * k + j) % 24]);
    tris.push([C, i0, i1]);
    tris.push([k === 5 ? hot(i0) : i0, m0, m1]);
    tris.push([k === 5 ? hot(i0) : i0, m1, k === 6 ? hot(i1) : i1]);
    tris.push([k === 6 ? hot(i1) : i1, m1, m2]);
    tris.push([m0, o[0], o[1]], [m0, o[1], m1], [m1, o[1], o[2]], [m1, o[2], m2], [m2, o[2], o[3]]);
  }
  /* the two cells next to the step along y = -22 */
  tris.push([hot(I[5]), M[9], M[10]], [hot(I[7]), M[14], M[15]]);
  const clamp = t => Math.max(0, Math.min(1, t));
  const ramp = (t, pts) => { for (let i = 1; i < pts.length; i++) if (t <= pts[i][0]) { const [a, u] = pts[i - 1], [b, w] = pts[i]; return u + (w - u) * (t - a) / (b - a); } return pts[pts.length - 1][1]; };
  const jet = t => { t = clamp(t); return [
    ramp(t, [[0, 0], [.35, 0], [.66, 1], [.89, 1], [1, .5]]),
    ramp(t, [[0, 0], [.125, 0], [.375, 1], [.64, 1], [.91, 0], [1, 0]]),
    ramp(t, [[0, .5], [.11, 1], [.34, 1], [.65, 0], [1, 0]])].map(c => Math.round(c * 255)); };

  const N = 346, cv = document.getElementById('wafer'), g = cv.getContext('2d'), img = g.createImageData(N, N);
  for (let k = 0; k < N * N; k++) img.data.set([229, 229, 229, 255], k * 4);
  const px = 3.44 / 2, cx = (698.4 - 354) / 2, cy = (1377.5 - 1032) / 2;
  tris.forEach(([a, b, c]) => {
    const P = [a, b, c].map(q => ({ x: cx + q.x * px, y: cy - q.y * px, v: q.v }));
    const [A, B, D] = P, den = (B.y - D.y) * (A.x - D.x) + (D.x - B.x) * (A.y - D.y);
    const x0 = Math.floor(Math.min(A.x, B.x, D.x)), x1 = Math.ceil(Math.max(A.x, B.x, D.x));
    const y0 = Math.floor(Math.min(A.y, B.y, D.y)), y1 = Math.ceil(Math.max(A.y, B.y, D.y));
    for (let y = y0; y <= y1; y++) for (let x = x0; x <= x1; x++) {
      const u = ((B.y - D.y) * (x - D.x) + (D.x - B.x) * (y - D.y)) / den;
      const w = ((D.y - A.y) * (x - D.x) + (A.x - D.x) * (y - D.y)) / den;
      const z = 1 - u - w;
      if (u < -1e-6 || w < -1e-6 || z < -1e-6) continue;
      img.data.set([...jet(u * A.v + w * B.v + z * D.v), 255], (y * N + x) * 4);
    }
  });
  g.putImageData(img, 0, 0);

  const p = pen('p6');
  const ys = [[1034, '100'], [1119.5, '75'], [1205.8, '50'], [1292, '25'], [1377.5, '0'], [1463.8, '−25'], [1550, '−50'], [1635.6, '−75'], [1721.8, '−100']];
  const dash = { 'stroke-dasharray': '7 3' };
  [354.4, 526.8, 698.4, 870.8, 1042.4].forEach(x => p.line(x, 1034, x, 1723, '#8c8c8c', 2, dash));
  ys.forEach(([y, s]) => {
    p.line(354, y, 1045, y, '#8c8c8c', 2, dash);
    p.line(341, y, 352, y, '#555', 3);
    p.text(330, y + 11, s, { 'text-anchor': 'end' });
  });
  p.add('circle', { cx: 698.4, cy: 1378, r: 344, fill: 'none', stroke: '#000', 'stroke-width': 3 });
  [C, ...I, ...M, ...O].forEach(q => p.add('circle', { cx: 698.4 + q.x * 3.44, cy: 1377.5 - q.y * 3.44, r: 6.6, fill: 'none', stroke: '#000', 'stroke-width': 2.2 }));
  p.text(373, 1014, 'Position of peak E1_2g (cm⁻¹)', { fill: '#000', 'font-size': 44 });
  p.vtext(226, 1378.5, 'Wafer size (mm)', 300);
  const k = { fill: '#000', 'font-size': 30.5 };
  p.text(386, 1752, 'Mean: 392.43', k);
  p.text(386, 1787, '3σ: 1.48', k);
  p.text(1040, 1752, 'Min: 390.43', { ...k, 'text-anchor': 'end' });
  p.text(1040, 1787, 'Max: 393.18', { ...k, 'text-anchor': 'end' });
  const grad = p.add('linearGradient', { id: 'jetbar', x1: 0, y1: 1, x2: 0, y2: 0 });
  for (let i = 0; i <= 40; i++) {
    const s = document.createElementNS(NS, 'stop');
    s.setAttribute('offset', i / 40);
    s.setAttribute('stop-color', `rgb(${jet(i / 40)})`);
    grad.appendChild(s);
  }
  p.rect(1101, 1034, 1133, 1721.8, 'url(#jetbar)');
  [[1719.8, '391.2'], [1640.2, '391.4'], [1560, '391.6'], [1479.7, '391.8']].forEach(([y, s]) => {
    p.line(1136, y, 1145, y, '#555', 3);
    p.text(1154, y + 11, s);
  });
}
```
